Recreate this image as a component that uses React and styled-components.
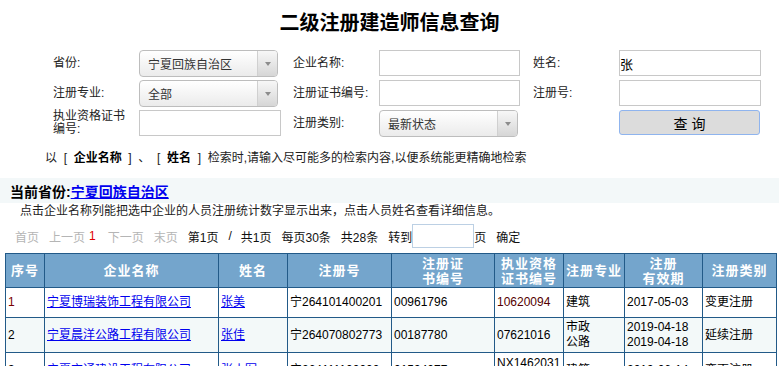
import React from 'react';
import styled, { createGlobalStyle } from 'styled-components';

const Global = createGlobalStyle`
  html, body { margin: 0; padding: 0; background: #fff; }
  body {
    font-family: "Liberation Sans", "Noto Sans CJK SC", sans-serif;
    font-size: 12px;
    color: #000;
    width: 779px;
    overflow: hidden;
  }
`;

const Page = styled.div`
  width: 779px;
`;

const Title = styled.h1`
  margin: 0;
  height: 44px;
  display: flex;
  align-items: center;
  justify-content: center;
  font-size: 20px;
  font-weight: bold;
  line-height: 24px;
  padding-top: 1px;
  box-sizing: border-box;
`;

const Form = styled.div`
  display: grid;
  grid-template-columns: 86px 154px 86px 154px 86px 142px;
  grid-auto-rows: 26px;
  row-gap: 4px;
  padding-left: 53px;
  margin-top: 6px;
`;

const Label = styled.div`
  display: flex;
  align-items: center;
  font-size: 12px;
  line-height: 13px;
  color: #222;
  max-width: 80px;
`;

const SelectBox = styled.div`
  width: 139px;
  height: 27px;
  box-sizing: border-box;
  border: 1px solid #bdbdbd;
  border-radius: 4px;
  background: linear-gradient(#ffffff, #ebebeb);
  display: flex;
  align-items: center;
  overflow: hidden;
`;

const SelectText = styled.span`
  flex: 1;
  padding-left: 8px;
  font-size: 12px;
  color: #333;
`;

const Arrow = styled.span`
  width: 19px;
  height: 100%;
  border-left: 1px solid #d0d0d0;
  background: linear-gradient(#f7f7f7, #d6d6d6);
  display: flex;
  align-items: center;
  justify-content: center;
  &::after {
    content: '';
    border-left: 3px solid transparent;
    border-right: 3px solid transparent;
    border-top: 4px solid #8c8c8c;
  }
`;

const Input = styled.input`
  width: ${p => p.$w || 141}px;
  height: 26px;
  box-sizing: border-box;
  border: 1px solid #c8c8c8;
  padding: 0;
  margin: 0;
  font-family: inherit;
  font-size: 13px;
  color: #000;
  outline: none;
`;

const Button = styled.button`
  width: 141px;
  height: 25px;
  box-sizing: border-box;
  border: 1px solid #8fb4ee;
  border-radius: 3px;
  background: #dcdcdc;
  font-family: inherit;
  font-size: 14px;
  color: #000;
  padding: 0;
  margin: 0;
`;

const Notice = styled.div`
  margin-top: 14px;
  padding-left: 45px;
  height: 16px;
  line-height: 16px;
  font-size: 12px;
  color: #222;
  white-space: pre;
`;

const Strong = styled.b`
  font-weight: bold;
  color: #000;
`;

const ProvinceBar = styled.div`
  margin-top: 12px;
  height: 25px;
  background: #f3f8f9;
  display: flex;
  align-items: center;
  padding-left: 10px;
  font-size: 14px;
  font-weight: bold;
`;

const ProvinceLink = styled.a`
  color: #0000ee;
  text-decoration: underline;
`;

const Tip = styled.div`
  padding-left: 20px;
  height: 16px;
  line-height: 16px;
  font-size: 12px;
  color: #222;
`;

const Pager = styled.div`
  margin-top: 5px;
  height: 24px;
  display: flex;
  align-items: center;
  padding-left: 15px;
  font-size: 12px;
  color: #111;
`;

const PageItem = styled.span`
  color: ${p => (p.$disabled ? '#b5b5b5' : p.$current ? '#e00000' : '#111')};
  margin-right: ${p => (p.$gap !== undefined ? p.$gap : 10)}px;
`;

const PageInput = styled.input`
  width: 62px;
  height: 24px;
  box-sizing: border-box;
  border: 1px solid #bcd0e4;
  padding: 0;
  margin: 0;
  outline: none;
`;

const Table = styled.table`
  margin-top: 5px;
  margin-left: 5px;
  width: 771px;
  border-collapse: collapse;
  table-layout: fixed;
  border: 1px solid #225a88;
`;

const Th = styled.th`
  background: #74a5cc;
  color: #fff;
  font-weight: bold;
  font-size: 13px;
  letter-spacing: 1px;
  line-height: 15px;
  text-align: center;
  border: 1px solid #225a88;
  padding: 0 2px;
`;

const HeadRow = styled.tr`
  height: 34px;
`;

const Row = styled.tr`
  height: ${p => p.$h}px;
  background: ${p => (p.$alt ? '#f3f9f9' : '#fff')};
`;

const Td = styled.td`
  border: 1px solid #225a88;
  padding: 0 2px;
  font-size: 12px;
  line-height: 15px;
  vertical-align: middle;
  color: ${p => p.$color || '#000'};
  word-break: break-all;
`;

const CellLink = styled.a`
  color: #0000ee;
  text-decoration: underline;
`;

const widths = [39, 174, 69, 104, 103, 69, 61, 78, 74];

const headers = ['序号', '企业名称', '姓名', '注册号', '注册证\n书编号', '执业资格\n证书编号', '注册专业', '注册\n有效期', '注册类别'];

const rows = [
  { no: '1', noColor: '#700', company: '宁夏博瑞装饰工程有限公司', name: '张美', reg: '宁264101400201', cert: '00961796', qual: '10620094', qualColor: '#500', major: ['建筑'], valid: ['2017-05-03'], type: '变更注册', h: 30 },
  { no: '2', company: '宁夏晨洋公路工程有限公司', name: '张佳', reg: '宁264070802773', cert: '00187780', qual: '07621016', major: ['市政', '公路'], valid: ['2019-04-18', '2019-04-18'], type: '延续注册', h: 35, alt: true },
  { no: '3', company: '宁夏交通建设工程有限公司', name: '张小军', reg: '宁264111100000', cert: '01594077', qual: 'NX1462031 12', major: ['建筑'], valid: ['2019-06-14'], type: '变更注册', h: 36 },
];

function Lines({ items }) {
  return items.map((t, i) => (
    <React.Fragment key={i}>
      {i > 0 && <br />}
      {t}
    </React.Fragment>
  ));
}

function Select({ value }) {
  return (
    <SelectBox>
      <SelectText>{value}</SelectText>
      <Arrow />
    </SelectBox>
  );
}

export default function App() {
  return (
    <Page>
      <Global />
      <Title>二级注册建造师信息查询</Title>
      <Form>
        <Label>省份:</Label>
        <Select value="宁夏回族自治区" />
        <Label>企业名称:</Label>
        <Input />
        <Label>姓名:</Label>
        <Input $w={142} defaultValue="张" />

        <Label>注册专业:</Label>
        <Select value="全部" />
        <Label>注册证书编号:</Label>
        <Input />
        <Label>注册号:</Label>
        <Input $w={142} />

        <Label>执业资格证书编号:</Label>
        <Input $w={142} />
        <Label>注册类别:</Label>
        <Select value="最新状态" />
        <div />
        <Button>查 询</Button>
      </Form>

      <Notice>
        以  [  <Strong>企业名称</Strong>  ]  、  [  <Strong>姓名</Strong>  ]  检索时,请输入尽可能多的检索内容,以便系统能更精确地检索
      </Notice>

      <ProvinceBar>
        当前省份:<ProvinceLink href="#">宁夏回族自治区</ProvinceLink>
      </ProvinceBar>

      <Tip>点击企业名称列能把选中企业的人员注册统计数字显示出来，点击人员姓名查看详细信息。</Tip>

      <Pager>
        <PageItem $disabled>首页</PageItem>
        <PageItem $disabled $gap={4}>上一页</PageItem>
        <PageItem $current $gap={12}>1</PageItem>
        <PageItem $disabled>下一页</PageItem>
        <PageItem $disabled>末页</PageItem>
        <PageItem>第1页</PageItem>
        <PageItem $gap={9}>/</PageItem>
        <PageItem>共1页</PageItem>
        <PageItem>每页30条</PageItem>
        <PageItem>共28条</PageItem>
        <PageItem $gap={0}>转到</PageItem>
        <PageInput />
        <PageItem>页</PageItem>
        <PageItem>确定</PageItem>
      </Pager>

      <Table>
        <colgroup>
          {widths.map((w, i) => (
            <col key={i} style={{ width: w }} />
          ))}
        </colgroup>
        <thead>
          <HeadRow>
            {headers.map((h, i) => (
              <Th key={i}>
                <Lines items={h.split('\n')} />
              </Th>
            ))}
          </HeadRow>
        </thead>
        <tbody>
          {rows.map((r, i) => (
            <Row key={i} $h={r.h} $alt={r.alt}>
              <Td $color={r.noColor}>{r.no}</Td>
              <Td><CellLink href="#">{r.company}</CellLink></Td>
              <Td><CellLink href="#">{r.name}</CellLink></Td>
              <Td>{r.reg}</Td>
              <Td>{r.cert}</Td>
              <Td $color={r.qualColor}>{r.qual}</Td>
              <Td><Lines items={r.major} /></Td>
              <Td><Lines items={r.valid} /></Td>
              <Td>{r.type}</Td>
            </Row>
          ))}
        </tbody>
      </Table>
    </Page>
  );
}
